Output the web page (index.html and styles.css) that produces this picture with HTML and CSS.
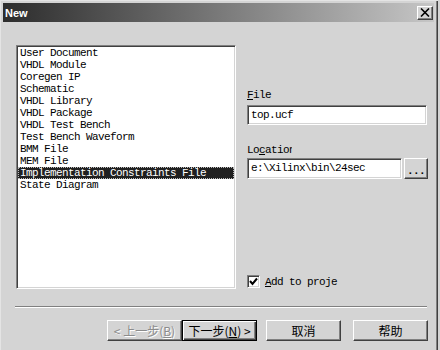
FILE: index.html
```html
<!DOCTYPE html>
<html lang="zh">
<head>
  <meta charset="UTF-8" />
  <title>New</title>
  <link rel="stylesheet" href="styles.css">
</head>
<body>
  <div class="window">
    <div class="titlebar">
      <span class="title">New</span>
      <span class="close">
        <svg width="10" height="9" viewBox="0 0 10 9">
          <path d="M1 0.5 L9 8.5 M9 0.5 L1 8.5" stroke="#000" stroke-width="1.6" fill="none"/>
        </svg>
      </span>
    </div>

    <div class="main">
      <ul class="list">
        <li>User Document</li>
        <li>VHDL Module</li>
        <li>Coregen IP</li>
        <li>Schematic</li>
        <li>VHDL Library</li>
        <li>VHDL Package</li>
        <li>VHDL Test Bench</li>
        <li>Test Bench Waveform</li>
        <li>BMM File</li>
        <li>MEM File</li>
        <li class="selected"><span>Implementation Constraints File</span></li>
        <li>State Diagram</li>
      </ul>

      <div class="side">
        <div class="field-label file-label"><u>F</u>ile</div>
        <div class="edit file-edit">top.ucf</div>

        <div class="field-label loc-label">Lo<u>c</u>ation</div>
        <div class="loc-row">
          <div class="edit loc-edit">e:\Xilinx\bin\24sec</div>
          <div class="btn browse">...</div>
        </div>

        <div class="check">
          <span class="box">
            <svg width="9" height="9" viewBox="0 0 9 9">
              <path d="M1 4 L3.5 7 L8 1.5" stroke="#000" stroke-width="2" fill="none"/>
            </svg>
          </span>
          <span><u>A</u>dd to proje</span>
        </div>
      </div>
    </div>

    <div class="separator"></div>

    <div class="buttons">
      <div class="btn disabled back">&lt; 上一步(<u>B</u>)</div>
      <div class="btn default next">下一步(<u>N</u>) &gt;</div>
      <div class="btn cancel">取消</div>
      <div class="btn help">帮助</div>
    </div>
  </div>
</body>
</html>
```

FILE: styles.css
```css
body {
  margin: 0;
  background: #d4d4d4;
  font-family: "Liberation Mono", "Noto Sans CJK SC", monospace;
  font-size: 11px;
  letter-spacing: -0.6px;
}

.window {
  width: 438px;
  height: 350px;
  box-sizing: border-box;
  padding: 3px 4px 0 3px;
  background: #d4d4d4;
  box-shadow: inset 1px 1px #e4e4e4, inset -1px 0 #404040, inset -2px 0 #808080;
  overflow: hidden;
}

/* title bar */
.titlebar {
  height: 19px;
  display: flex;
  align-items: center;
  justify-content: space-between;
  background: linear-gradient(to right, #2c2c2c, #c6c6c6);
}

.title {
  margin-left: 2px;
  color: #fff;
  font-family: "Liberation Sans", Arial, sans-serif;
  font-weight: bold;
  font-size: 11px;
  letter-spacing: 0;
}

.close {
  width: 16px;
  height: 14px;
  margin-right: 1px;
  box-sizing: border-box;
  display: flex;
  align-items: center;
  justify-content: center;
  background: #d4d4d4;
  border: 1px solid;
  border-color: #fff #404040 #404040 #fff;
  box-shadow: inset -1px -1px #808080;
}

/* list + side panel */
.main {
  display: flex;
  padding: 23px 0 0 13px;
  gap: 11px;
  height: 244px;
}

.list {
  width: 220px;
  height: 244px;
  box-sizing: border-box;
  margin: 0;
  padding: 1px 0 0 0;
  list-style: none;
  background: #fff;
  border: 1px solid;
  border-color: #808080 #fff #fff #808080;
  box-shadow: inset 1px 1px #404040, inset -1px -1px #d4d4d4;
}

.list li {
  height: 12px;
  line-height: 12px;
  margin: 0 1px;
  padding-left: 2px;
  white-space: nowrap;
  color: #000;
}

.list li.selected {
  background: #202020;
  color: #fff;
  outline: 1px dotted #bbb;
  outline-offset: -1px;
}

.side {
  width: 181px;
  display: flex;
  flex-direction: column;
}

.field-label {
  height: 12px;
  line-height: 12px;
  white-space: nowrap;
  overflow: hidden;
}

.file-label {
  margin-top: 44px;
  margin-bottom: 4px;
}

.loc-label {
  width: 45px;
  margin-top: 19px;
  margin-bottom: 2px;
}

.edit {
  height: 20px;
  line-height: 18px;
  box-sizing: border-box;
  padding-left: 3px;
  background: #fff;
  border: 1px solid;
  border-color: #808080 #fff #fff #808080;
  box-shadow: inset 1px 1px #404040, inset -1px -1px #d4d4d4;
  white-space: nowrap;
  overflow: hidden;
}

.file-edit {
  width: 180px;
}

.loc-row {
  display: flex;
  gap: 2px;
}

.loc-edit {
  width: 156px;
  height: 21px;
  line-height: 19px;
}

.btn {
  box-sizing: border-box;
  display: flex;
  align-items: center;
  justify-content: center;
  background: #d4d4d4;
  border: 1px solid;
  border-color: #fff #404040 #404040 #fff;
  box-shadow: inset -1px -1px #808080;
  white-space: nowrap;
  color: #000;
}

.browse {
  width: 24px;
  height: 21px;
  font-weight: bold;
  padding-top: 4px;
}

.check {
  margin-top: auto;
  margin-bottom: 1px;
  display: flex;
  align-items: center;
  gap: 5px;
  height: 13px;
}

.box {
  width: 13px;
  height: 13px;
  box-sizing: border-box;
  display: flex;
  align-items: center;
  justify-content: center;
  background: #fff;
  border: 1px solid;
  border-color: #808080 #fff #fff #808080;
  box-shadow: inset 1px 1px #404040, inset -1px -1px #d4d4d4;
}

/* bottom */
.separator {
  height: 1px;
  margin: 17px 7px 0 12px;
  background: #808080;
  border-bottom: 1px solid #fff;
}

.buttons {
  display: flex;
  justify-content: flex-end;
  margin-top: 12px;
  padding-right: 6px;
  font-family: "Noto Sans CJK SC", "Liberation Sans", sans-serif;
  font-size: 12px;
  letter-spacing: 0;
}

.buttons .btn {
  width: 75px;
  height: 21px;
}

.buttons .disabled {
  color: #8c8c8c;
  text-shadow: 1px 1px #fff;
}

.buttons .default {
  border: 1px solid #000;
  box-shadow: inset 1px 1px #fff, inset -1px -1px #404040, inset -2px -2px #808080;
}

.buttons .cancel {
  margin-left: 9px;
}

.buttons .help {
  margin-left: 12px;
}
```
